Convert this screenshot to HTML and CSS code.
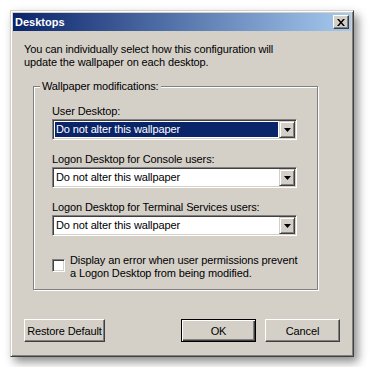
FILE: index.html
```html
<!DOCTYPE html>
<html lang="en">
<head>
    <meta charset="UTF-8">
    <title>Desktops</title>
    <link rel="stylesheet" href="styles.css">
</head>
<body>
    <div class="window">
        <div class="titlebar">
            <span class="title">Desktops</span>
            <span class="close">
                <svg width="8" height="7" viewBox="0 0 8 7">
                    <path d="M0 0h2l2 2.5L6 0h2L5 3.5 8 7H6L4 4.5 2 7H0l3-3.5z" fill="#000"/>
                </svg>
            </span>
        </div>
        <div class="content">
            <p class="intro">You can individually select how this configuration will<br>update the wallpaper on each desktop.</p>

            <fieldset class="group">
                <legend>Wallpaper modifications:</legend>
                <div class="group-body">
                    <div class="field">
                        <label>User Desktop:</label>
                        <div class="combo">
                            <span class="value selected">Do not alter this wallpaper</span>
                            <span class="drop"><svg width="7" height="4" viewBox="0 0 7 4"><path d="M0 0h7L3.5 4z" fill="#000"/></svg></span>
                        </div>
                    </div>
                    <div class="field">
                        <label>Logon Desktop for Console users:</label>
                        <div class="combo">
                            <span class="value">Do not alter this wallpaper</span>
                            <span class="drop"><svg width="7" height="4" viewBox="0 0 7 4"><path d="M0 0h7L3.5 4z" fill="#000"/></svg></span>
                        </div>
                    </div>
                    <div class="field">
                        <label>Logon Desktop for Terminal Services users:</label>
                        <div class="combo">
                            <span class="value">Do not alter this wallpaper</span>
                            <span class="drop"><svg width="7" height="4" viewBox="0 0 7 4"><path d="M0 0h7L3.5 4z" fill="#000"/></svg></span>
                        </div>
                    </div>
                    <div class="check-row">
                        <span class="checkbox"></span>
                        <span class="check-text">Display an error when user permissions prevent<br>a Logon Desktop from being modified.</span>
                    </div>
                </div>
            </fieldset>

            <div class="buttons">
                <button class="btn restore">Restore Default</button>
                <span class="spacer"></span>
                <button class="btn default">OK</button>
                <button class="btn">Cancel</button>
            </div>
        </div>
    </div>
</body>
</html>
```

FILE: styles.css
```css
body {
    margin: 0;
    padding: 10px;
    background: #fff;
    font-family: "Liberation Sans", Arial, sans-serif;
    font-size: 11px;
    letter-spacing: -0.12px;
    color: #000;
}

.window {
    width: 344px;
    height: 347px;
    box-sizing: border-box;
    padding: 2px;
    background: #d4d0c8;
    border: 1px solid;
    border-color: #d4d0c8 #404040 #404040 #d4d0c8;
    box-shadow: inset 1px 1px #fff, inset -1px -1px #808080, 4px 5px 9px rgba(0, 0, 0, 0.45);
    display: flex;
    flex-direction: column;
}

.titlebar {
    height: 18px;
    padding: 0 2px 0 2px;
    display: flex;
    align-items: center;
    justify-content: space-between;
    background: linear-gradient(to right, #0a246a, #a6caf0);
}

.title {
    color: #fff;
    font-weight: bold;
    font-size: 11px;
    letter-spacing: 0;
}

.close {
    width: 16px;
    height: 14px;
    box-sizing: border-box;
    background: #d4d0c8;
    border: 1px solid;
    border-color: #fff #404040 #404040 #fff;
    box-shadow: inset -1px -1px #808080;
    display: flex;
    align-items: center;
    justify-content: center;
}

.content {
    padding: 12px 11px 0 11px;
}

.intro {
    margin: 0;
    line-height: 13px;
}

.group {
    margin: 11px 0 0 9px;
    padding: 0;
    width: 281px;
    box-sizing: border-box;
    border: 1px solid #808080;
    box-shadow: inset 1px 1px #fff, 1px 1px #fff;
}

.group legend {
    margin-left: 6px;
    padding: 0 2px;
    line-height: 13px;
    background: #d4d0c8;
}

.group-body {
    padding: 12px 20px 9px 18px;
}

.field {
    margin-bottom: 13px;
}

.field label {
    display: block;
    line-height: 13px;
    margin-bottom: 1px;
}

.combo {
    height: 21px;
    box-sizing: border-box;
    padding: 1px;
    background: #fff;
    border: 1px solid;
    border-color: #808080 #fff #fff #808080;
    box-shadow: inset 1px 1px #404040, inset -1px -1px #d4d0c8;
    display: flex;
}

.value {
    flex: 1;
    margin: 1px;
    padding-left: 1px;
    line-height: 15px;
}

.value.selected {
    background: #0a246a;
    color: #fff;
}

.drop {
    width: 16px;
    box-sizing: border-box;
    background: #d4d0c8;
    border: 1px solid;
    border-color: #d4d0c8 #404040 #404040 #d4d0c8;
    box-shadow: inset 1px 1px #fff, inset -1px -1px #808080;
    display: flex;
    align-items: center;
    justify-content: center;
}

.check-row {
    margin-top: 18px;
    display: flex;
    align-items: flex-start;
    gap: 5px;
}

.checkbox {
    flex: none;
    width: 13px;
    height: 13px;
    margin-top: 5px;
    box-sizing: border-box;
    background: #fff;
    border: 1px solid;
    border-color: #808080 #fff #fff #808080;
    box-shadow: inset 1px 1px #404040, inset -1px -1px #d4d0c8;
}

.check-text {
    line-height: 13px;
    white-space: nowrap;
}

.buttons {
    margin-top: 29px;
    display: flex;
    gap: 9px;
}

.spacer {
    flex: 1;
}

.btn {
    width: 75px;
    height: 23px;
    padding: 0;
    box-sizing: border-box;
    font-family: "Liberation Sans", Arial, sans-serif;
    font-size: 11px;
    letter-spacing: -0.12px;
    color: #000;
    background: #d4d0c8;
    border: 1px solid;
    border-color: #fff #404040 #404040 #fff;
    box-shadow: inset -1px -1px #808080;
}

.btn.restore {
    width: 81px;
}

.btn.default {
    border-color: #000;
    box-shadow: inset 1px 1px #fff, inset -1px -1px #404040, inset -2px -2px #808080;
}
```
